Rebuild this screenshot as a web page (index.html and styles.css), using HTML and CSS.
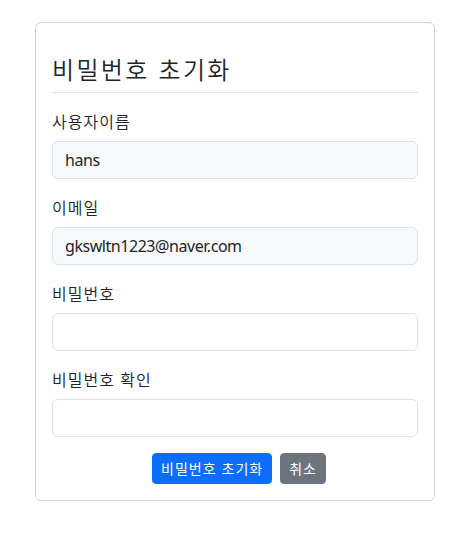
FILE: index.html
```html
<!DOCTYPE html>
<html lang="ko">
<head>
<meta charset="utf-8">
<title>비밀번호 초기화</title>
<link rel="stylesheet" href="styles.css">
</head>
<body>
<div class="card">
  <div class="card-body">
    <h3 class="title">비밀번호 초기화</h3>
    <hr class="divider">
    <form class="form">
      <div class="group">
        <label class="label">사용자이름</label>
        <div class="control readonly">hans</div>
      </div>
      <div class="group">
        <label class="label">이메일</label>
        <div class="control readonly">gkswltn1223@naver.com</div>
      </div>
      <div class="group">
        <label class="label">비밀번호</label>
        <input class="control" type="password">
      </div>
      <div class="group">
        <label class="label">비밀번호 확인</label>
        <input class="control" type="password">
      </div>
      <div class="actions">
        <button type="button" class="btn btn-primary">비밀번호 초기화</button>
        <button type="button" class="btn btn-secondary">취소</button>
      </div>
    </form>
  </div>
</div>
</body>
</html>
```

FILE: styles.css
```css
* { box-sizing: border-box; }
html, body { margin: 0; padding: 0; background: #fff; }
body {
  font-family: "Noto Sans", "Noto Sans CJK KR", sans-serif;
  font-size: 16px;
  line-height: 1.5;
  color: #212529;
  padding-top: 22px;
}
.card {
  width: 400px;
  margin: 0 0 0 35px;
  border: 1px solid #d3d4d5;
  border-radius: 6px;
  background: #fff;
}
.card-body { padding: 16px; }
.title {
  margin: 16px 0 8px;
  font-size: 24px;
  font-weight: 350;
  line-height: 1.2;
  letter-spacing: 2.3px;
  font-family: "Noto Sans CJK KR", sans-serif;
}
.divider {
  margin: 0 0 16px;
  border: 0;
  border-top: 1px solid #dfdfdf;
}
.form { display: flex; flex-direction: column; }
.group { display: flex; flex-direction: column; margin-bottom: 16px; }
.label {
  margin-bottom: 8px;
  font-family: "Noto Sans CJK KR", sans-serif;
  font-weight: 350;
  line-height: 24px;
  letter-spacing: 1px;
}
.control {
  display: block;
  width: 100%;
  height: 38px;
  padding: 6px 12px;
  font: inherit;
  font-size: 16px;
  line-height: 24px;
  letter-spacing: -0.45px;
  color: #212529;
  background: #fff;
  border: 1px solid #dee2e6;
  border-radius: 6px;
  outline: none;
}
.control.readonly { background: #f8f9fa; }
.actions {
  display: flex;
  justify-content: center;
  gap: 8px;
  padding-left: 8px;
}
.btn {
  height: 31px;
  padding: 4px 8px;
  font-family: "Noto Sans CJK KR", sans-serif;
  font-size: 14px;
  line-height: 21px;
  letter-spacing: 1px;
  color: #fff;
  border: 1px solid transparent;
  border-radius: 4px;
  cursor: pointer;
}
.btn-primary { background: #0d6efd; border-color: #0d6efd; }
.btn-secondary { background: #6c757d; border-color: #6c757d; }
```
